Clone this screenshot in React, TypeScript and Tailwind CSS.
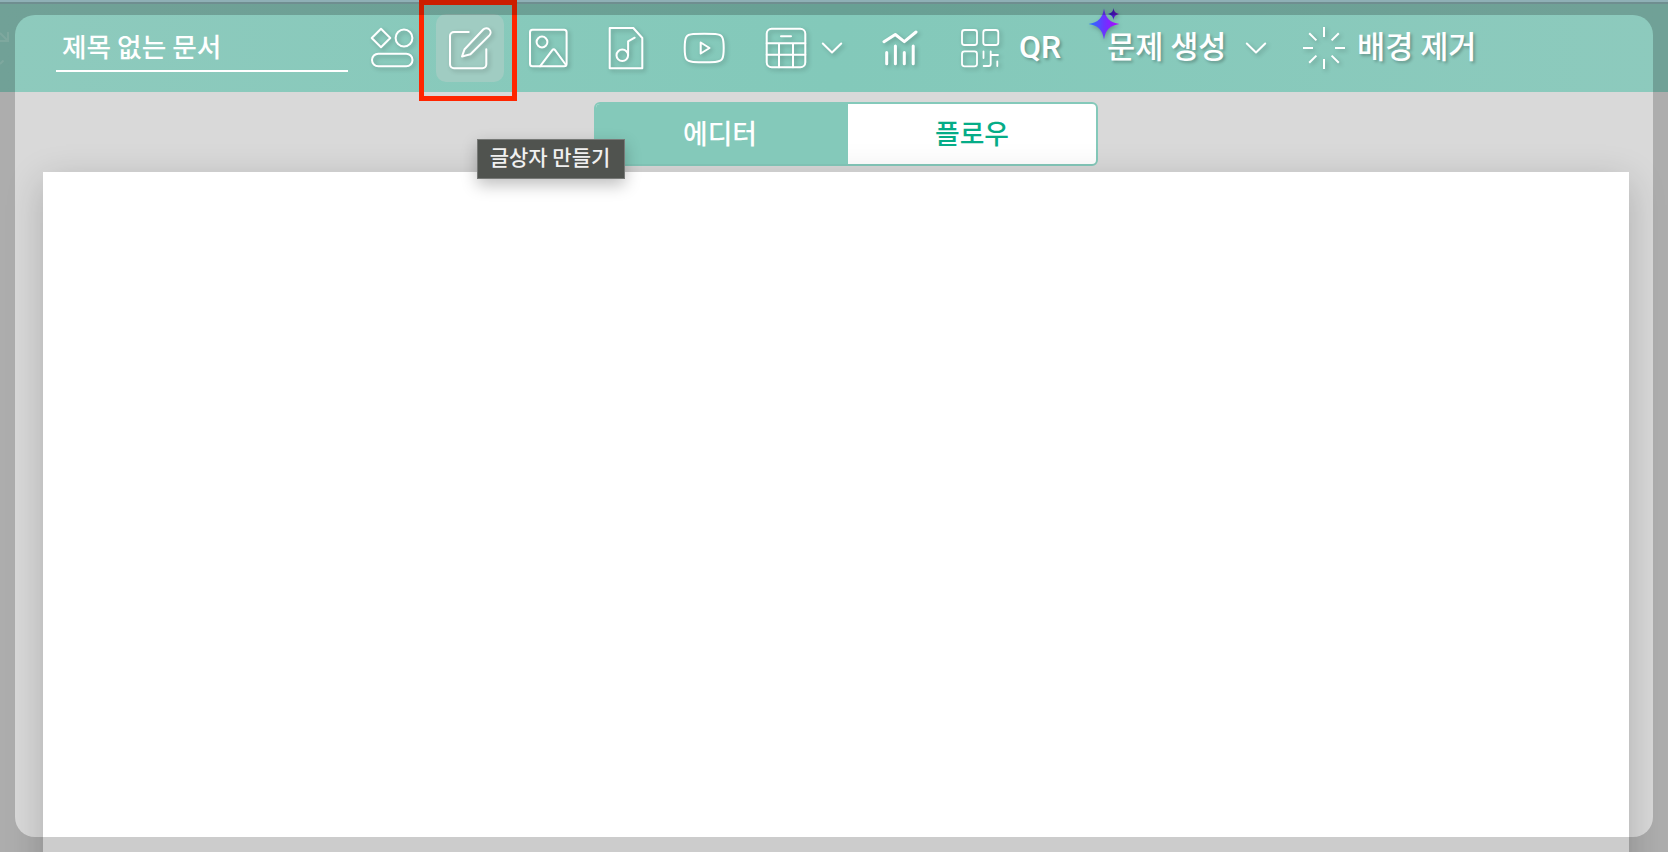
import type { ReactNode } from "react";

function Icon({ children, width = 44, stroke = 2 }: { children: ReactNode; width?: number; stroke?: number }) {
  return (
    <svg
      width={width}
      height={44}
      viewBox={`0 0 ${width} 44`}
      fill="none"
      stroke="white"
      strokeWidth={stroke}
      strokeLinecap="round"
      strokeLinejoin="round"
      className="shrink-0 drop-shadow-[2px_2px_2px_rgba(0,0,0,0.22)]"
    >
      {children}
    </svg>
  );
}

function Chevron() {
  return (
    <Icon width={28}>
      <path d="M4.8 17.5 14 26.5l9.2-9" />
    </Icon>
  );
}

function Sparkles() {
  return (
    <svg width="34" height="36" viewBox="0 0 34 36" className="absolute -left-[20px] -top-[22px] drop-shadow-[1px_2px_2px_rgba(0,0,0,0.25)]">
      <defs>
        <linearGradient id="spark" x1="0" y1="0" x2="1" y2="0">
          <stop offset="0" stopColor="#1f78ff" />
          <stop offset="0.5" stopColor="#6a35ff" />
          <stop offset="1" stopColor="#b800ff" />
        </linearGradient>
        <linearGradient id="spark-small" x1="0" y1="0" x2="1" y2="0">
          <stop offset="0" stopColor="#1c1ccf" />
          <stop offset="1" stopColor="#7d10c0" />
        </linearGradient>
      </defs>
      <path fill="url(#spark)" d="M16 4.5C17.7 14.500 21.500 18.300 31.500 20 21.500 21.700 17.700 25.500 16 35.500 14.300 25.500 10.500 21.700.5 20 10.500 18.300 14.300 14.500 16 4.500Z" />
      <path fill="url(#spark-small)" d="M25.500 4C26.200 8 27.500 9.300 31.500 10 27.500 10.700 26.200 12 25.500 16 24.800 12 23.500 10.700 19.500 10 23.500 9.300 24.800 8 25.500 4Z" />
    </svg>
  );
}

const label = "whitespace-nowrap leading-[39px] font-medium text-shadow-[2px_2px_3px_rgba(0,0,0,0.25)]";

function Toolbar() {
  return (
    <header className="relative flex h-[88px] items-center bg-linear-to-r from-[#8ecabd] via-[#83c9ba] to-[#8dcabd] pl-14 text-white">
      {/* tail of the control scrolled off the left edge */}
      <svg width="12" height="40" viewBox="0 0 12 40" fill="none" stroke="white" strokeOpacity="0.15" strokeWidth="2" className="absolute left-0 top-[26px]">
        <path d="M0 3l8 8M8 2v9H0M0 34l3.500-3.500" />
      </svg>

      <div className="mt-1 flex h-11 w-[292px] shrink-0 items-center border-b-2 border-white pb-1.5 pl-1.5">
        <span className="text-[26.7px] leading-9 font-medium whitespace-nowrap">제목 없는 문서</span>
      </div>

      <div className="ml-[22px] flex items-center">
        <Icon>
          <path d="M11 2.700 20.300 12 11 21.300 1.700 12Z" />
          <circle cx="34" cy="12" r="8.400" />
          <rect x="2" y="27.700" width="40.500" height="12.600" rx="6.300" />
        </Icon>
      </div>

      {/* text box tool, active */}
      <button className="relative ml-[22px] flex size-[68px] shrink-0 items-center justify-center rounded-[10px] bg-[#a0ccc2]">
        <Icon>
          <path d="M20.700 6H6a4 4 0 0 0-4 4v28.300a4 4 0 0 0 4 4h28.300a4 4 0 0 0 4-4v-15" />
          <path d="m14 30.500 2.600-7.300L35.200 3.500a4.200 4.200 0 0 1 6.200 5.900L22.400 28.200Z" />
        </Icon>
        <div className="pointer-events-none absolute -left-[17px] -top-[14px] h-[101px] w-[98px] border-5 border-[#ff2600]" />
      </button>

      <div className="ml-[22px] flex items-center gap-[34px]">
        <Icon>
          <rect x="4" y="3.700" width="36.600" height="36.600" rx="2.500" />
          <circle cx="16" cy="16" r="5.400" />
          <path d="m14 40.300 12.300-16.100q1.400-1.800 2.800 0L40 39" />
        </Icon>
        <Icon>
          <path d="M5.700 2h23.600l9 10v30.300H5.700Z" />
          <circle cx="18.300" cy="29.300" r="5.800" />
          <path d="M24.100 29.300v-14l6.600-3.600" />
        </Icon>
        <Icon>
          <path d="M2.700 22c0-11.500 1.500-13.300 8.500-13.900 7-.5 15-.5 22 0 7 .6 8.500 2.400 8.500 13.900s-1.500 13.300-8.500 13.900c-7 .5-15 .5-22 0-7-.6-8.500-2.400-8.500-13.900Z" />
          <path d="M18.700 16.500 27.500 22l-8.800 5.500Z" />
        </Icon>
      </div>

      <div className="ml-[38px] flex items-center gap-2.5">
        <Icon>
          <rect x="2.700" y="2.700" width="38.600" height="38.600" rx="5" />
          <path d="M2.700 17.300h38.600M2.700 28.700h38.600M15 17.300v24M29 17.300v24M17 10.200h10" />
        </Icon>
        <Chevron />
      </div>

      <div className="ml-8 flex items-center">
        <Icon stroke={3}>
          <path d="m6 15.700 11.300-7.200 9 7.200L38 6M8.700 26.500v11.300M17.400 20v17.800M26.300 26.500v11.300M35.200 20v17.800" />
        </Icon>
      </div>

      <div className="ml-9 flex items-center">
        <Icon stroke={1.8}>
          <rect x="4" y="4" width="15" height="15" rx="2.500" />
          <rect x="25.300" y="4" width="15" height="15" rx="2.500" />
          <rect x="4" y="25.300" width="15" height="15" rx="2.500" />
          <path d="M25.500 25.300v6.700M32.700 25.300V38a2 2 0 0 1-2 2h-5M32.700 29H40M39.300 35.300V40" />
        </Icon>
        <span className={`ml-[17px] w-[89px] pb-px font-[Roboto,sans-serif] text-[32px] ${label}`}>QR</span>
      </div>

      <div className="relative flex items-center">
        <span className={`-ml-px w-[135px] pb-[5px] text-[30.6px] ${label}`}>문제 생성</span>
        <Sparkles />
        <Chevron />
      </div>

      <div className="ml-8 flex items-center">
        <Icon>
          <path strokeLinecap="butt" d="M22 1v10M22 33v10M1 22h10M33 22h10M7.200 7.200l7.200 7.200M29.600 29.600l7.200 7.200M36.800 7.200l-7.200 7.200M14.400 29.600l-7.200 7.200" />
        </Icon>
        <span className={`ml-[11px] pb-[5px] text-[30.6px] ${label}`}>배경 제거</span>
      </div>
    </header>
  );
}

function ViewTabs() {
  return (
    <div className="mt-2.5 ml-[594px] flex h-16 w-[504px] overflow-hidden rounded-md border-2 border-[#84c9ba] bg-white text-[26.8px] leading-none font-medium">
      <button className="w-[252px] bg-[#84c9ba] pr-1 pb-px text-white">에디터</button>
      <button className="flex-1 pb-px text-[#05ac87]">플로우</button>
    </div>
  );
}

export default function App() {
  return (
    <div className="relative h-[852px] w-[1668px] overflow-hidden bg-[#d9d9d9] font-['Noto_Sans_CJK_KR',sans-serif]">
      <div className="h-1 border-b-2 border-[#8bb2b5] bg-[#b3dce4]" />
      <Toolbar />
      <ViewTabs />
      <main className="mt-1.5 ml-[43px] h-[720px] w-[1586px] bg-white shadow-[0_10px_36px_rgba(0,0,0,0.2)]" />

      <div className="absolute left-[477px] top-[139px] flex h-10 w-[148px] items-center justify-center border border-[#777977] bg-[#50534f] pr-0.5 pb-1 text-[21px] font-medium whitespace-nowrap text-[#f0f0f0] shadow-[0_6px_16px_rgba(0,0,0,0.25)]">
        글상자 만들기
      </div>

      {/* dimmed surround with a rounded opening */}
      <div className="pointer-events-none absolute inset-[15px] rounded-[20px] shadow-[0_0_0_60px_rgba(0,0,0,0.2)]" />
    </div>
  );
}
